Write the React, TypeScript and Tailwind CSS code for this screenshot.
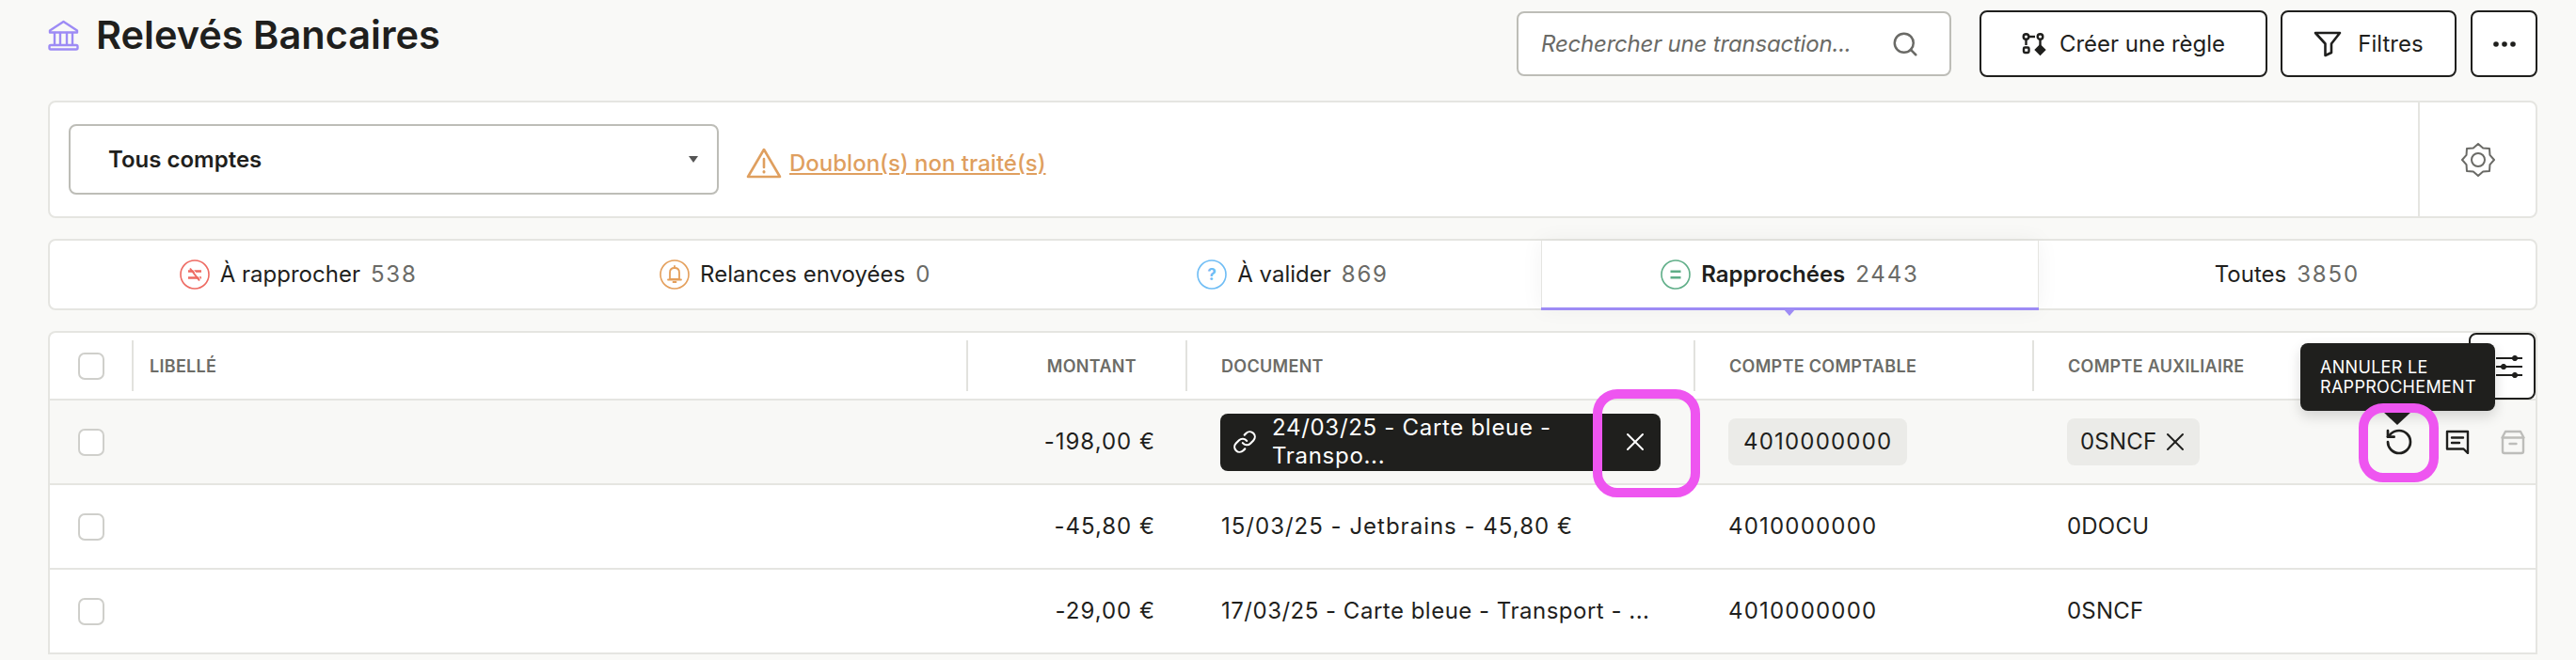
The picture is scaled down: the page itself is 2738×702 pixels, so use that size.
import { X, Search, Link, RotateCcw } from 'lucide-react';

const FONT = "font-['Inter','Noto_Sans',sans-serif]";

const BankIcon = () => (
  <svg width="33" height="33" viewBox="0 0 33 33" fill="none" stroke="#9D8BF5" strokeWidth="2.4" strokeLinejoin="round" strokeLinecap="round">
    <path d="M16.5 2 L31 11.5 V13.5 H2 V11.5 Z" />
    <path d="M7 14 V26 M13 14 V26 M20 14 V26 M26 14 V26" />
    <rect x="1.5" y="27" width="30" height="4.5" rx="1.5" />
  </svg>
);

const RuleIcon = () => (
  <svg width="26" height="26" viewBox="0 0 26 26" fill="none" stroke="#1F1F1D" strokeWidth="2.4">
    <circle cx="4.5" cy="5" r="2.8" />
    <path d="M4.5 8 V14" />
    <rect x="2" y="16.5" width="5.5" height="5.5" rx="1.2" />
    <path d="M8 5 H14" />
    <circle cx="19.5" cy="5" r="2.8" />
    <path d="M19.5 8 V15" />
    <path d="M19.5 14.5 L24 19 L19.5 23.5 L15 19 Z" fill="#1F1F1D" />
  </svg>
);

const FunnelIcon = () => (
  <svg width="30" height="28" viewBox="0 0 30 28" fill="none" stroke="#1F1F1D" strokeWidth="2.6" strokeLinejoin="round">
    <path d="M2 2 H28 L19 13.5 V23 L12.5 26 V13.5 Z" />
  </svg>
);

const DotsIcon = () => (
  <svg width="26" height="8" viewBox="0 0 26 8" fill="#1F1F1D">
    <circle cx="4" cy="4" r="2.8" />
    <circle cx="13" cy="4" r="2.8" />
    <circle cx="22" cy="4" r="2.8" />
  </svg>
);

const WarnIcon = () => (
  <svg width="38" height="33" viewBox="0 0 38 33" fill="none" stroke="#DF9F5F" strokeWidth="2.6" strokeLinejoin="round" strokeLinecap="round">
    <path d="M19 2 L36 31 H2 Z" />
    <path d="M19 12 V21" />
    <path d="M19 25.5 V26" strokeWidth="3" />
  </svg>
);

// roue crantée à 8 dents, comme dans la barre du compte
const gearPoints = Array.from({ length: 16 }, (_, i) => {
  const angle = (i * Math.PI) / 8 - Math.PI / 2;
  const radius = i % 2 === 0 ? 17 : 13.5;
  return `${(18 + radius * Math.cos(angle)).toFixed(2)},${(18 + radius * Math.sin(angle)).toFixed(2)}`;
}).join(' ');

const GearIcon = () => (
  <svg width="36" height="36" viewBox="0 0 36 36" fill="none" stroke="#6A6A66" strokeWidth="2" strokeLinejoin="round">
    <polygon points={gearPoints} />
    <circle cx="18" cy="18" r="7" />
  </svg>
);

const ToValidate = () => (
  <svg width="32" height="32" viewBox="0 0 32 32" fill="none">
    <circle cx="16" cy="16" r="15" stroke="#EE6A62" strokeWidth="1.6" />
    <path d="M9 12.5 H23 M9 19.5 H23" stroke="#EE6A62" strokeWidth="2.4" />
    <path d="M11 9.5 L21 22.5" stroke="#EE6A62" strokeWidth="2" />
    <path d="M11 9.5 L21 22.5" stroke="#FFFFFF" strokeWidth="1" transform="translate(1.6 -1)" />
  </svg>
);

const BellRing = () => (
  <svg width="32" height="32" viewBox="0 0 32 32" fill="none" stroke="#E49F5B">
    <circle cx="16" cy="16" r="15" strokeWidth="1.6" />
    <path d="M11 21 V14 C11 11 13 9 16 9 C19 9 21 11 21 14 V21 Z M9 21.5 H23" strokeWidth="1.8" strokeLinejoin="round" strokeLinecap="round" />
    <path d="M16 7 V9 M14.5 24 H17.5" strokeWidth="1.8" strokeLinecap="round" />
  </svg>
);

const QuestionRing = () => (
  <svg width="32" height="32" viewBox="0 0 32 32" fill="none">
    <circle cx="16" cy="16" r="15" stroke="#6FBDF5" strokeWidth="1.6" />
    <text x="16" y="22" textAnchor="middle" fontSize="17" fontWeight="700" fill="#6FBDF5" fontFamily="Inter, sans-serif">?</text>
  </svg>
);

const EqualRing = () => (
  <svg width="32" height="32" viewBox="0 0 32 32" fill="none">
    <circle cx="16" cy="16" r="15" stroke="#5FAE88" strokeWidth="1.6" />
    <path d="M10.5 12.8 H21.5 M10.5 19.2 H21.5" stroke="#5FAE88" strokeWidth="2.6" />
  </svg>
);

const SlidersIcon = () => (
  <svg width="30" height="28" viewBox="0 0 30 28" fill="#1F1F1D" stroke="#1F1F1D">
    <path d="M1 5 H29 M1 14 H29 M1 23 H29" strokeWidth="2.2" />
    <circle cx="21" cy="5" r="2.6" />
    <circle cx="9" cy="14" r="2.6" />
    <circle cx="21" cy="23" r="2.6" />
  </svg>
);

const CommentIcon = () => (
  <svg width="26" height="26" viewBox="0 0 26 26" fill="none" stroke="#1F1F1D" strokeWidth="2.4" strokeLinejoin="round">
    <path d="M2 2 H24 V25 L19.5 20.5 H2 Z" />
    <path d="M7 8.5 H19 M7 14 H15" strokeLinecap="round" />
  </svg>
);

const ArchiveIcon = () => (
  <svg width="26" height="27" viewBox="0 0 26 27" fill="none" stroke="#BDBDBA" strokeWidth="2.4" strokeLinejoin="round">
    <path d="M5 2 H21 L24.5 8.5 H1.5 Z" />
    <path d="M2 8.5 V23 A2 2 0 0 0 4 25 H22 A2 2 0 0 0 24 23 V8.5" />
    <path d="M9.5 15 H16.5" strokeLinecap="round" />
  </svg>
);

const tabs = [
  { label: 'À rapprocher', count: '538', icon: <ToValidate /> },
  { label: 'Relances envoyées', count: '0', icon: <BellRing /> },
  { label: 'À valider', count: '869', icon: <QuestionRing /> },
  { label: 'Rapprochées', count: '2443', icon: <EqualRing />, active: true },
  { label: 'Toutes', count: '3850' },
];

const rows = [
  { amount: '-45,80 €', doc: '15/03/25 - Jetbrains - 45,80 €', docClass: 'tracking-[1px]', account: '4010000000', aux: '0DOCU' },
  { amount: '-29,00 €', doc: '17/03/25 - Carte bleue - Transport - ...', docClass: 'tracking-[0.5px]', account: '4010000000', aux: '0SNCF' },
];

const GRID = 'grid grid-cols-[87px_887px_233px_540px_360px_1fr]';
const HEAD = 'flex items-center h-[54px] border-l-2 border-[#E2E2DE] text-[18px] tracking-[0.3px] font-semibold text-[#6C6C67]';

const Checkbox = () => (
  <div className="w-[28px] h-[29px] rounded-[7px] border-2 border-[#CFCFCB] bg-white" />
);

export default function App() {
  return (
    <div className={`${FONT} w-[2738px] h-[702px] overflow-hidden bg-[#F9F9F7] pl-[51px] pr-[41px] pt-[11px] text-[#1F1F1D]`}>
      {/* entête */}
      <div className="flex justify-between h-[71px]">
        <div className="flex items-start gap-[18px] pt-[10px]">
          <BankIcon />
          <h1 className="text-[41.5px] leading-[30px] pt-[1px] font-semibold">Relevés Bancaires</h1>
        </div>
        <div className="flex items-start">
          <div className="flex items-center justify-between w-[462px] h-[69px] mt-px mr-[30px] pl-[24px] pr-[32px] rounded-[8px] border-2 border-[#BDBDB7] bg-white">
            <span className="text-[24px] italic text-[#6A6A66] tracking-[-0.2px]">Rechercher une transaction...</span>
            <Search size={30} color="#6A6A66" strokeWidth={2} />
          </div>
          <button className="flex items-center justify-center gap-[14px] w-[306px] h-[71px] mr-[14px] rounded-[8px] border-2 border-[#1F1F1D] bg-white text-[24px]">
            <RuleIcon />
            Créer une règle
          </button>
          <button className="flex items-center justify-center gap-[17px] w-[187px] h-[71px] mr-[15px] rounded-[8px] border-2 border-[#1F1F1D] bg-white text-[24px]">
            <FunnelIcon />
            Filtres
          </button>
          <button className="flex items-center justify-center w-[71px] h-[71px] rounded-[8px] border-2 border-[#1F1F1D] bg-white">
            <DotsIcon />
          </button>
        </div>
      </div>

      {/* sélection du compte */}
      <div className="flex mt-[25px] h-[125px] rounded-[8px] border-2 border-[#E5E5E1] bg-white">
        <div className="flex flex-1 items-center pl-[20px]">
          <div className="flex items-center justify-between w-[691px] h-[75px] pl-[40px] pr-[20px] rounded-[8px] border-2 border-[#BDBDB7] text-[24px] font-semibold">
            Tous comptes
            <span className="w-0 h-0 border-x-[5px] border-x-transparent border-t-[7px] border-t-[#555]" />
          </div>
          <div className="flex items-end gap-[8px] ml-[29px] pt-[8px] text-[#DF9F5F]">
            <WarnIcon />
            <span className="text-[24px] font-medium underline decoration-2 underline-offset-2 leading-[32px]">Doublon(s) non traité(s)</span>
          </div>
        </div>
        <div className="flex items-center justify-center w-[125px] border-l-2 border-[#E5E5E1]">
          <GearIcon />
        </div>
      </div>

      {/* onglets */}
      <div className="grid grid-cols-5 mt-[22px] h-[76px] rounded-[8px] border-2 border-[#E5E5E1] bg-white">
        {tabs.map((tab) => (
          <div
            key={tab.label}
            className={`relative flex items-center justify-center gap-[11px] text-[24px] ${tab.active ? 'font-semibold border-x border-[#E5E5E1] shadow-[0_0_24px_rgba(0,0,0,0.05)]' : 'font-normal'}`}
          >
            {tab.icon}
            <span>{tab.label}</span>
            <span className="text-[#6A6A66] font-normal tracking-[1.8px]">{tab.count}</span>
            {tab.active && (
              <>
                <span className="absolute -left-px -right-px -bottom-[2px] h-[3px] bg-[#9D8BF5]" />
                <span className="absolute left-1/2 -ml-[6px] -bottom-[8px] w-0 h-0 border-x-[6px] border-x-transparent border-t-[7px] border-t-[#9D8BF5]" />
              </>
            )}
          </div>
        ))}
      </div>

      {/* tableau */}
      <div className="relative mt-[22px] border-x-2 border-t-2 border-[#E5E5E1] bg-white rounded-t-[8px] text-[24px] tracking-[0.2px]">
        <div className={`${GRID} items-center h-[72px] border-b-2 border-[#E5E5E1]`}>
          <div className="pl-[30px]"><Checkbox /></div>
          <div className={`${HEAD} pl-[17px]`}>LIBELLÉ</div>
          <div className={`${HEAD} justify-end pr-[52px]`}>MONTANT</div>
          <div className={`${HEAD} pl-[36px]`}>DOCUMENT</div>
          <div className={`${HEAD} pl-[36px]`}>COMPTE COMPTABLE</div>
          <div className={`${HEAD} pl-[36px]`}>COMPTE AUXILIAIRE</div>
        </div>

        {/* ligne rapprochée */}
        <div className={`${GRID} items-center h-[90px] border-b-2 border-[#E5E5E1] bg-[#F8F8F6]`}>
          <div className="pl-[30px]"><Checkbox /></div>
          <div />
          <div className="text-right pr-[32px] tracking-[1px]">-198,00 €</div>
          <div className="pl-[37px]">
            <div className="flex items-center w-[468px] h-[61px] pl-[13px] pr-[11px] rounded-[8px] bg-[#1F1F1D] text-white">
              <Link size={26} strokeWidth={2} className="shrink-0" />
              <span className="ml-[16px] w-[310px] leading-[30px] tracking-[0.7px]">24/03/25 - Carte bleue - Transpo...</span>
              <X size={32} strokeWidth={1.5} className="ml-auto shrink-0" />
            </div>
          </div>
          <div className="pl-[37px]">
            <span className="inline-flex items-center h-[50px] px-[16px] rounded-[8px] bg-[#EBEBE8] tracking-[1.2px]">4010000000</span>
          </div>
          <div className="flex items-center pl-[37px]">
            <span className="inline-flex items-center gap-[4px] h-[50px] pl-[14px] pr-[10px] rounded-[8px] bg-[#EBEBE8]">
              0SNCF
              <X size={32} strokeWidth={1.5} />
            </span>
            <div className="flex items-center ml-auto pr-[11px] gap-[33px]">
              <RotateCcw size={32} strokeWidth={2} />
              <CommentIcon />
              <ArchiveIcon />
            </div>
          </div>
        </div>

        {rows.map((row) => (
          <div key={row.doc} className={`${GRID} items-center h-[90px] border-b-2 border-[#E5E5E1]`}>
            <div className="pl-[30px]"><Checkbox /></div>
            <div />
            <div className="text-right pr-[32px] tracking-[1px]">{row.amount}</div>
            <div className={`pl-[38px] ${row.docClass}`}>{row.doc}</div>
            <div className="pl-[37px] tracking-[1.2px]">{row.account}</div>
            <div className="pl-[37px]">{row.aux}</div>
          </div>
        ))}

        {/* bouton colonnes, sous l'infobulle */}
        <div className="absolute right-0 top-0 flex items-center justify-center w-[71px] h-[71px] pl-[14px] rounded-[8px] border-2 border-[#1F1F1D] bg-white">
          <SlidersIcon />
        </div>

        {/* infobulle */}
        <div className="absolute left-[2392px] top-[11px] w-[207px] h-[72px] pl-[21px] pt-[15px] rounded-[8px] bg-[#1F1F1D] text-[18px] leading-[21px] tracking-[0.3px] text-white shadow-[0_6px_14px_rgba(0,0,0,0.15)]">
          ANNULER LE RAPPROCHEMENT
          <span className="absolute left-[87px] -bottom-[15px] w-0 h-0 border-x-[16px] border-x-transparent border-t-[15px] border-t-[#1F1F1D]" />
        </div>

        {/* annotations */}
        <div className="absolute left-[1640px] top-[60px] w-[114px] h-[115px] rounded-[26px] border-[10px] border-[#EE55F0]" />
        <div className="absolute left-[2454px] top-[75px] w-[85px] h-[84px] rounded-[26px] border-[10px] border-[#EE55F0]" />
      </div>
    </div>
  );
}
